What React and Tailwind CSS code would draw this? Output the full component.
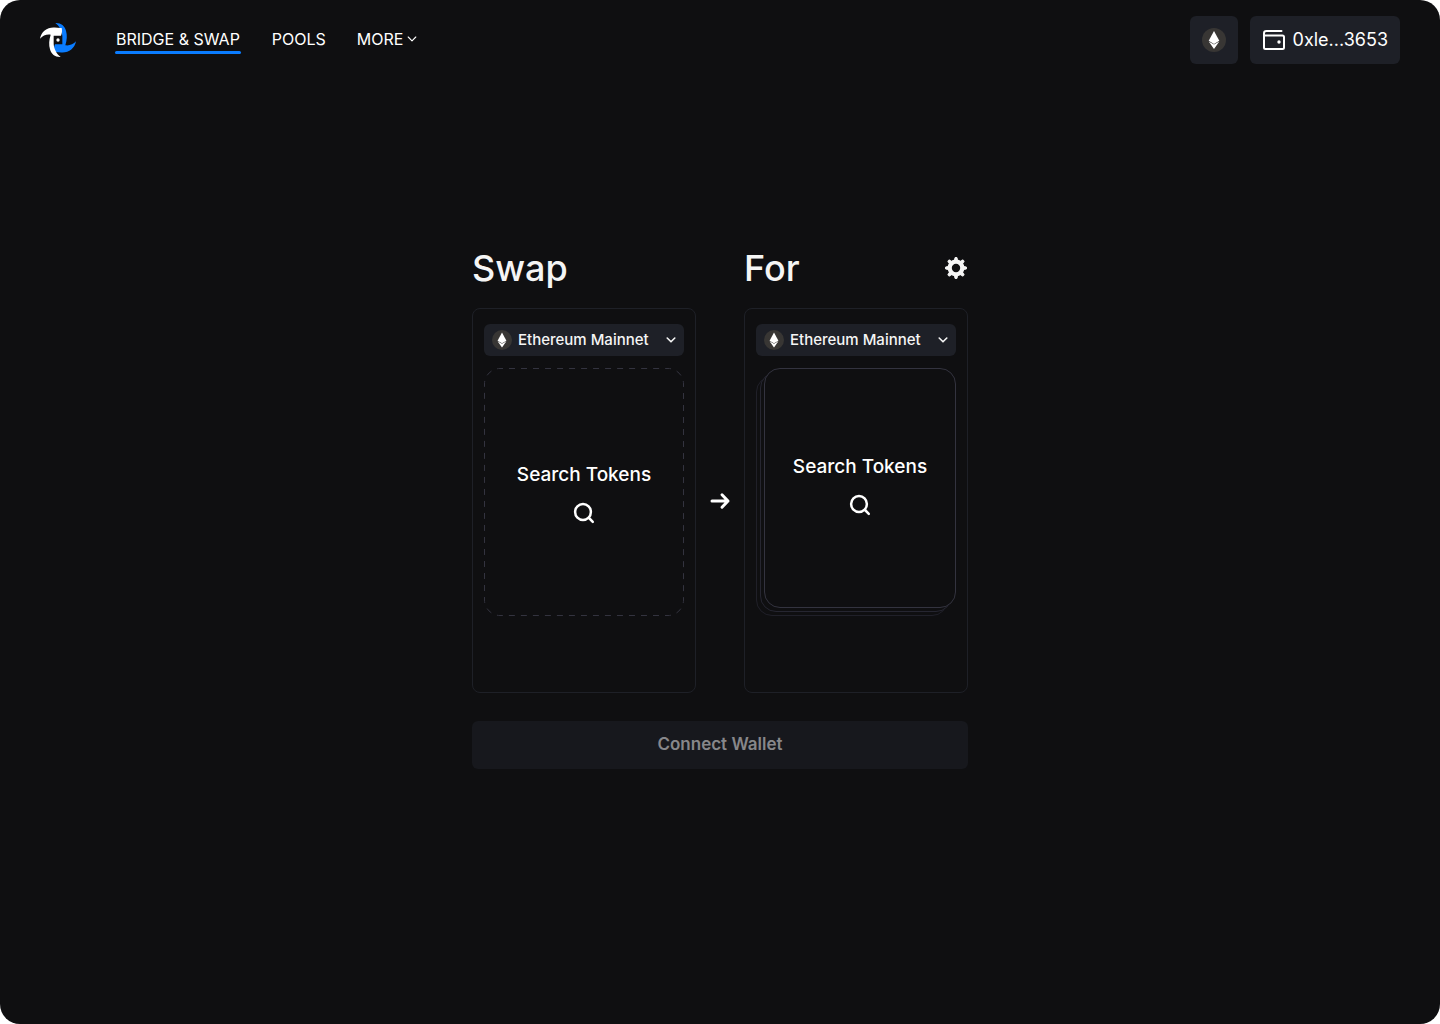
import React from "react";

const LogoHalf = ({ className }) => (
  <path
    className={className}
    d="M30 84C34 62 52 49 74 50.5C82 51 89 53 95 52C97 60 96 68 93 75H71V100C72 115 80 130 92 139C76 140 64 131 60 116C56 102 57 88 62 72C50 70 38 75 30 84Z"
  />
);

const Logo = () => (
  <svg viewBox="30 34 108 108" className="size-9" aria-hidden="true">
    <g transform="rotate(180 84 88)">
      <LogoHalf className="fill-[#0a7cff]" />
    </g>
    <LogoHalf className="fill-white" />
    <circle cx="84" cy="88" r="5" className="fill-white" />
  </svg>
);

const Ethereum = ({ className }) => (
  <svg viewBox="0 0 24 24" className={className} aria-hidden="true">
    <circle cx="12" cy="12" r="12" fill="#383634" />
    <path d="M12 3L17.3 12.8L12 16L6.7 12.8Z" fill="#fff" />
    <path d="M6.7 13.4L12 16.6L17.3 13.4L12 21Z" fill="#fff" />
  </svg>
);

const Chevron = ({ className, width }) => (
  <svg viewBox="0 0 10 10" className={className} fill="none" stroke="currentColor" strokeWidth={width} strokeLinecap="round" strokeLinejoin="round" aria-hidden="true">
    <path d="M1.2 3L5 6.8L8.8 3" />
  </svg>
);

const Wallet = () => (
  <svg viewBox="0 0 24 24" className="size-6" fill="none" stroke="#fff" strokeWidth="2" strokeLinejoin="round" aria-hidden="true">
    <path d="M19.5 3H4.5C3 3 2 3.8 2 5.2V19.5C2 20.6 2.7 21 3.6 21H20.4C21.4 21 22 20.4 22 19.5V9C22 8 21.4 7.5 20.4 7.5H2" strokeLinecap="round" />
    <circle cx="17" cy="14" r="1.7" fill="#fff" stroke="none" />
  </svg>
);

const Search = () => (
  <svg viewBox="0 0 24 24" className="size-6" fill="none" stroke="#fff" strokeWidth="2.5" strokeLinecap="round" aria-hidden="true">
    <circle cx="11" cy="11" r="7.9" />
    <path d="M17 17L20.8 20.8" />
  </svg>
);

const Gear = () => (
  <svg viewBox="0 0 24 24" className="size-6" fill="none" stroke="#f5f5f5" aria-hidden="true">
    <circle cx="12" cy="12" r="6.3" strokeWidth="4.2" />
    {[0, 45, 90, 135, 180, 225, 270, 315].map((a) => (
      <path key={a} d="M10.4 5L11 1.6H13L13.6 5Z" fill="#f5f5f5" strokeWidth="1" strokeLinejoin="round" transform={`rotate(${a} 12 12)`} />
    ))}
  </svg>
);

const Arrow = () => (
  <svg viewBox="0 0 24 24" className="size-6" fill="none" stroke="#fff" strokeWidth="3" strokeLinecap="round" strokeLinejoin="round" aria-hidden="true">
    <path d="M4 12H20M14 5.8L20 12L14 18.2" />
  </svg>
);

const NetworkSelect = ({ label }) => (
  <div className="grid h-8 items-center rounded-md bg-[#1e2027]">
    <select
      aria-label={label}
      className="col-start-1 row-start-1 h-8 w-full cursor-pointer appearance-none rounded-md bg-transparent pr-8 pl-[34px] text-[15px] font-medium text-[#f5f5f5]"
    >
      <option>Ethereum Mainnet</option>
    </select>
    <Ethereum className="pointer-events-none col-start-1 row-start-1 ml-2 size-5" />
    <Chevron width="1.6" className="pointer-events-none col-start-1 row-start-1 mr-2 size-2.5 justify-self-end text-[#f5f5f5]" />
  </div>
);

const SearchTokens = () => (
  <>
    <span className="text-[19px]/7 font-medium">Search Tokens</span>
    <Search />
  </>
);

const Panel = ({ title, action, children }) => (
  <section className="flex min-w-0 flex-1 flex-col gap-3">
    <div className="flex h-14 items-center justify-between">
      <h2 className="text-4xl font-medium text-[#f5f5f5]">{title}</h2>
      {action}
    </div>
    <div className="flex flex-col gap-3 rounded-lg border border-[#1e2027] px-[11px] pt-[15px] pb-[76px]">
      <NetworkSelect label={`${title} network`} />
      {children}
    </div>
  </section>
);

export default function App() {
  return (
    <div className="bg-white font-['Inter',sans-serif] text-white">
      <div className="flex min-h-screen flex-col rounded-[20px] bg-[#0f0f11]">
        <header className="flex h-20 items-center justify-between px-10">
          <div className="flex items-center gap-[39px]">
            <a href="#" aria-label="Home">
              <Logo />
            </a>
            <nav className="flex items-start gap-[31px] text-base/6">
              <a href="#bridge" className="flex flex-col">
                <span className="px-px">BRIDGE &amp; SWAP</span>
                <span className="h-[3px] rounded-full bg-[#0a7cff]" />
              </a>
              <a href="#pools">POOLS</a>
              <button className="flex items-center gap-1">
                MORE
                <Chevron width="1.1" className="size-2.5" />
              </button>
            </nav>
          </div>
          <div className="flex items-center gap-3">
            <button aria-label="Network" className="flex size-12 items-center justify-center rounded-md bg-[#1e2027]">
              <Ethereum className="size-6" />
            </button>
            <button className="flex h-12 items-center gap-[7px] rounded-md bg-[#1e2027] px-3 text-lg">
              <Wallet />
              0xle...3653
            </button>
          </div>
        </header>

        <main className="mx-auto w-full max-w-[496px] pt-40 pb-16">
          <div className="flex">
            <Panel title="Swap">
              <button className="grid h-[248px]">
                <svg className="col-start-1 row-start-1 size-full" viewBox="0 0 200 248" fill="none" aria-hidden="true">
                  <rect x="0.5" y="0.5" width="199" height="247" rx="15.5" stroke="#33333f" pathLength="864" strokeDasharray="6 6" strokeDashoffset="3" />
                </svg>
                <span className="col-start-1 row-start-1 flex flex-col items-center gap-3 self-center pt-0.5">
                  <SearchTokens />
                </span>
              </button>
            </Panel>
            <div className="flex w-12 items-center justify-center pt-[68px]">
              <Arrow />
            </div>
            <Panel
              title="For"
              action={
                <button aria-label="Settings">
                  <Gear />
                </button>
              }
            >
              <div className="grid h-[248px]">
                <div className="col-start-1 row-start-1 mt-2 mr-2 rounded-2xl border border-[#202029]" />
                <div className="col-start-1 row-start-1 m-1 rounded-2xl border border-[#262631] bg-[#0f0f11]" />
                <button className="col-start-1 row-start-1 mb-2 ml-2 flex flex-col items-center justify-center gap-3 rounded-2xl border border-[#33333f] bg-[#0f0f11] pb-1.5">
                  <SearchTokens />
                </button>
              </div>
            </Panel>
          </div>
          <button className="mt-7 h-12 w-full rounded-md bg-[#17181d] text-[17px] font-semibold text-[#87878a]">
            Connect Wallet
          </button>
        </main>
      </div>
    </div>
  );
}
